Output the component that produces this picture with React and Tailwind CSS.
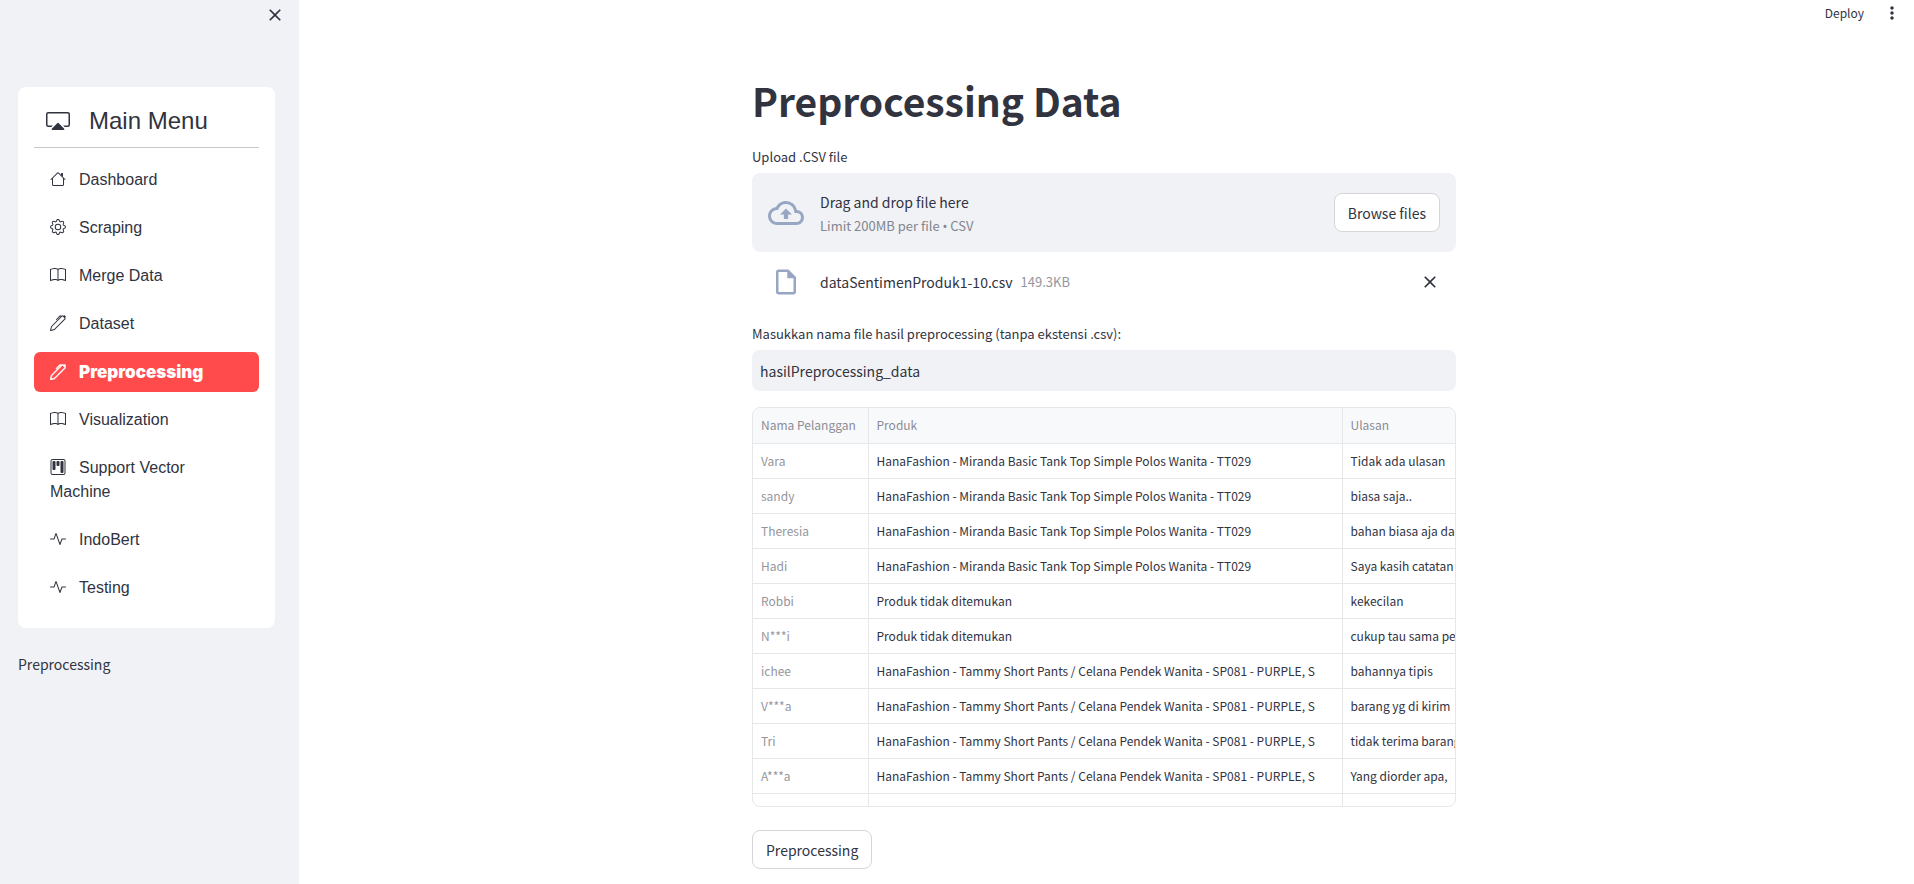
import { BsActivity, BsBook, BsCast, BsGear, BsKanban, BsPen } from "react-icons/bs";
import { MdClose, MdMoreVert, MdOutlineCloudUpload, MdOutlineInsertDriveFile } from "react-icons/md";

function HouseIcon({ className }) {
  return (
    <svg className={className} width="16" height="16" viewBox="0 0 16 16" fill="currentColor" aria-hidden="true">
      <path
        fillRule="evenodd"
        d="M2 13.5V7h1v6.5a.5.5 0 0 0 .5.5h9a.5.5 0 0 0 .5-.5V7h1v6.5a1.5 1.5 0 0 1-1.5 1.5h-9A1.5 1.5 0 0 1 2 13.5zm11-11V6l-2-2V2.5a.5.5 0 0 1 .5-.5h1a.5.5 0 0 1 .5.5z"
      />
      <path
        fillRule="evenodd"
        d="M7.293 1.5a1 1 0 0 1 1.414 0l6.647 6.646a.5.5 0 0 1-.708.708L8 2.207 1.354 8.854a.5.5 0 1 1-.708-.708L7.293 1.5z"
      />
    </svg>
  );
}

const menu = [
  { label: "Dashboard", Icon: HouseIcon },
  { label: "Scraping", Icon: BsGear },
  { label: "Merge Data", Icon: BsBook },
  { label: "Dataset", Icon: BsPen },
  { label: "Preprocessing", Icon: BsPen, active: true },
  { label: "Visualization", Icon: BsBook },
  { label: "Support Vector Machine", Icon: BsKanban },
  { label: "IndoBert", Icon: BsActivity },
  { label: "Testing", Icon: BsActivity },
];

const tank = "HanaFashion - Miranda Basic Tank Top Simple Polos Wanita - TT029";
const pants = "HanaFashion - Tammy Short Pants / Celana Pendek Wanita - SP081 - PURPLE, S";
const missing = "Produk tidak ditemukan";

const rows = [
  ["Vara", tank, "Tidak ada ulasan"],
  ["sandy", tank, "biasa saja.."],
  ["Theresia", tank, "bahan biasa aja dan"],
  ["Hadi", tank, "Saya kasih catatan"],
  ["Robbi", missing, "kekecilan"],
  ["N***i", missing, "cukup tau sama penjual"],
  ["ichee", pants, "bahannya tipis"],
  ["V***a", pants, "barang yg di kirim"],
  ["Tri", pants, "tidak terima barang"],
  ["A***a", pants, "Yang diorder apa,"],
  ["", "", ""],
];

function Sidebar() {
  return (
    <aside className="w-[299px] shrink-0 bg-[#f0f2f6] px-[18px]">
      <div className="flex h-[87px] justify-end">
        <button type="button" aria-label="Close sidebar" className="mt-[5px] -mr-1 size-5">
          <MdClose size={20} />
        </button>
      </div>
      <div className="mr-[6px] rounded-lg bg-white px-4 pt-4 pb-5 font-['Liberation_Sans',Arial,sans-serif]">
        <div className="flex h-[45px] items-center gap-[19px] border-b border-[#c8c9cc] px-3 pb-2 text-2xl">
          <BsCast size={24} />
          <span>Main Menu</span>
        </div>
        <nav className="mt-3 flex flex-col gap-2">
          {menu.map(({ label, Icon, active }) => (
            <a
              key={label}
              href="#"
              className={
                active
                  ? "block rounded-md bg-[#ff4b4b] px-4 py-2 font-['Inter',sans-serif] text-[17px] leading-6 font-black text-white"
                  : "block rounded-md px-4 py-2 text-base leading-6"
              }
            >
              <Icon
                className={
                  active
                    ? "mr-[13px] inline size-4 stroke-current stroke-[0.5] align-[-2px]"
                    : "mr-[13px] inline size-4 align-[-2px]"
                }
              />
              {label}
            </a>
          ))}
        </nav>
      </div>
      <p className="mt-6 text-sm leading-6">Preprocessing</p>
    </aside>
  );
}

function DataTable() {
  return (
    <div className="mt-4 h-[400px] overflow-hidden rounded-lg border border-[#e6e7e9]">
      <table className="w-full table-fixed border-collapse text-left text-xs whitespace-nowrap">
        <colgroup>
          <col className="w-[115px]" />
          <col className="w-[474px]" />
          <col />
        </colgroup>
        <thead>
          <tr className="h-[35px] border-b border-[#e6e7e9] bg-[#f8f9fb] text-[#8b8d95]">
            <th className="border-r border-[#e6e7e9] px-2 font-normal">Nama Pelanggan</th>
            <th className="border-r border-[#e6e7e9] px-2 font-normal">Produk</th>
            <th className="px-2 font-normal">Ulasan</th>
          </tr>
        </thead>
        <tbody>
          {rows.map(([name, product, review], i) => (
            <tr key={i} className="h-[35px] border-b border-[#e6e7e9]">
              <td className="border-r border-[#e6e7e9] px-2 text-[#95969d]">{name}</td>
              <td className="border-r border-[#e6e7e9] px-2">{product}</td>
              <td className="overflow-hidden pl-2">{review}</td>
            </tr>
          ))}
        </tbody>
      </table>
    </div>
  );
}

export default function App() {
  return (
    <div className="flex min-h-screen bg-white font-['Noto_Sans_CJK_SC',sans-serif] text-[#31333f]">
      <Sidebar />
      <div className="flex min-w-0 grow flex-col">
        <header className="flex h-[26px] items-center justify-end gap-[18px] pr-3">
          <button type="button" className="text-xs">Deploy</button>
          <button type="button" aria-label="More options">
            <MdMoreVert size={20} />
          </button>
        </header>
        <main className="mr-[5px] px-4 pt-12 pb-3">
          <div className="mx-auto max-w-[704px]">
            <h1 className="text-[39px] leading-[53px] font-bold">Preprocessing Data</h1>
            <label htmlFor="csv" className="mt-[18px] block text-[13px] leading-6">
              Upload .CSV file
            </label>
            <input id="csv" type="file" accept=".csv" className="sr-only" />
            <div className="mt-1 flex h-[79px] items-center rounded-lg bg-[#f0f2f6] px-4">
              <MdOutlineCloudUpload size={36} className="mr-4 text-[#97a6c3]" />
              <div className="grow pt-0.5">
                <div className="text-sm leading-6">Drag and drop file here</div>
                <div className="text-[13px] leading-6 text-[#83858d]">
                  Limit 200MB per file <span className="font-['Noto_Sans',sans-serif] leading-none">•</span> CSV
                </div>
              </div>
              <button type="button" className="h-[39px] rounded-lg border border-[#d5d6d9] bg-white px-[13px] text-sm">
                Browse files
              </button>
            </div>
            <div className="mt-[14px] flex h-8 items-center px-4">
              <MdOutlineInsertDriveFile size={30} className="mr-[19px] ml-[3px] text-[#97a6c3]" />
              <span className="text-sm">dataSentimenProduk1-10.csv</span>
              <span className="ml-2 grow text-[13px] text-[#95969d]">149.3KB</span>
              <button type="button" aria-label="Remove file">
                <MdClose size={20} />
              </button>
            </div>
            <label htmlFor="filename" className="mt-6 block text-[13px] leading-6">
              Masukkan nama file hasil preprocessing (tanpa ekstensi .csv):
            </label>
            <input
              id="filename"
              type="text"
              defaultValue="hasilPreprocessing_data"
              className="mt-1 block h-[41px] w-full rounded-lg bg-[#f0f2f6] px-2 text-sm"
            />
            <DataTable />
            <button type="button" className="mt-[23px] block h-[39px] rounded-lg border border-[#d5d6d9] px-[13px] text-sm">
              Preprocessing
            </button>
          </div>
        </main>
      </div>
    </div>
  );
}
